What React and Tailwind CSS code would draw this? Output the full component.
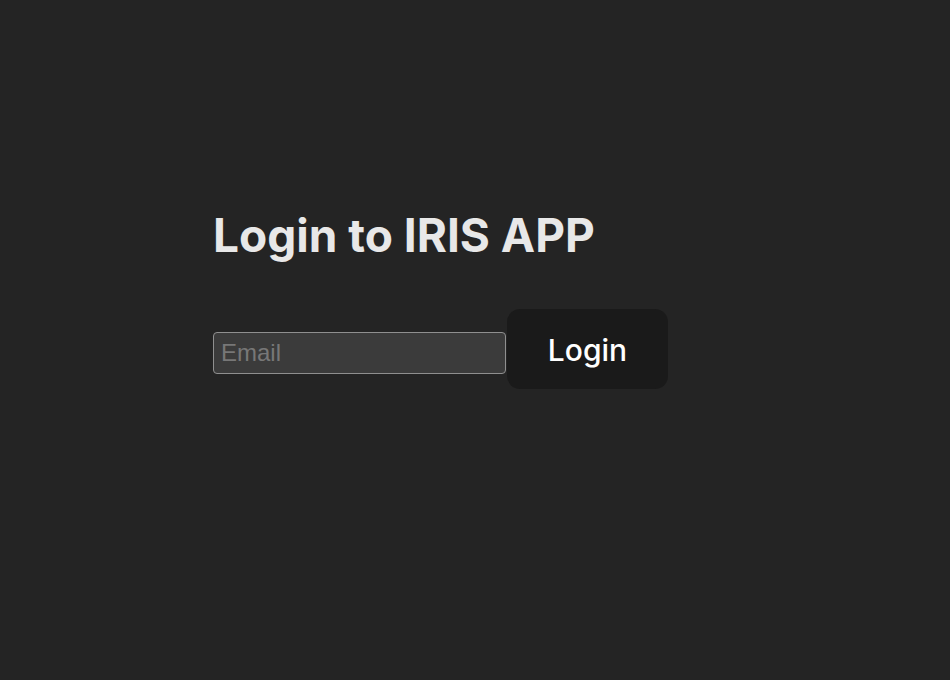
export default function App() {
  return (
    <div className="min-h-[680px] w-full bg-[#242424] pt-[205px] pl-[213px]" style={{ fontFamily: "Inter, sans-serif" }}>
      <h1 className="text-[46px] leading-[60px] font-bold text-[#e8e8e8] m-0">Login to IRIS APP</h1>
      <div className="flex items-start mt-[44px]">
        <input
          type="text"
          placeholder="Email"
          className="mt-[23px] w-[293px] h-[42px] bg-[#3b3b3b] border border-[#8f8f8f] rounded-[4px] px-[7px] text-[24px] text-white placeholder:text-[#777777] outline-none"
          style={{ fontFamily: "'Liberation Sans', Arial, sans-serif" }}
        />
        <button className="ml-[1px] w-[161px] h-[80px] pt-[3px] bg-[#1a1a1a] rounded-[13px] text-[30px] font-medium text-white">
          Login
        </button>
      </div>
    </div>
  );
}
